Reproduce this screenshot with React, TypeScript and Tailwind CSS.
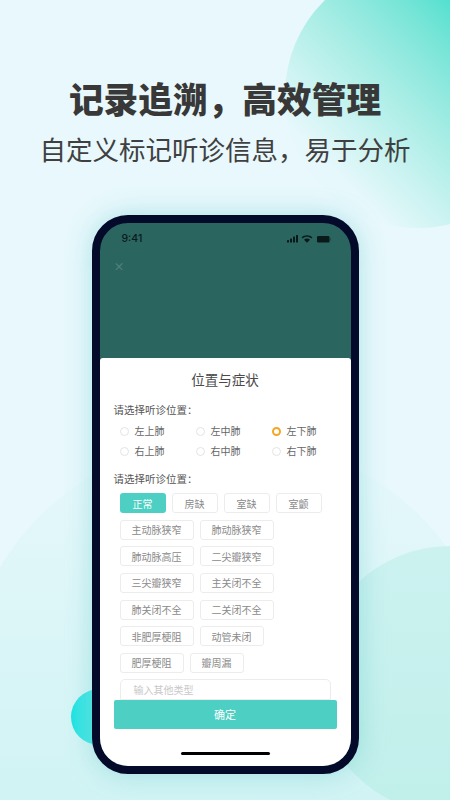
import React from 'react';

const radios = ['左上肺', '左中肺', '左下肺', '右上肺', '右中肺', '右下肺'];

const tagRows = [
  ['正常', '房缺', '室缺', '室颤'],
  ['主动脉狭窄', '肺动脉狭窄'],
  ['肺动脉高压', '二尖瓣狭窄'],
  ['三尖瓣狭窄', '主关闭不全'],
  ['肺关闭不全', '二关闭不全'],
  ['非肥厚梗阻', '动管未闭'],
  ['肥厚梗阻', '瓣周漏'],
];

const StatusIcons = () => (
  <svg width="44" height="10" viewBox="0 0 44 10" fill="#0a1a1a">
    {/* signal */}
    <rect x="0" y="6" width="2" height="2.500" rx="0.500" />
    <rect x="3" y="4.500" width="2" height="4" rx="0.500" />
    <rect x="6" y="2.500" width="2" height="6" rx="0.500" />
    <rect x="9" y="1" width="2" height="7.500" rx="0.500" />
    {/* wifi */}
    <path d="M20 1.200c-2.100 0-4 .8-5.400 2.100l1.100 1.200c1.100-1.100 2.700-1.700 4.300-1.700s3.200.6 4.300 1.700l1.100-1.200C24 2 22.100 1.200 20 1.200zM20 4.600c-1.200 0-2.200.4-3 1.200l3 3 3-3c-.8-.8-1.800-1.200-3-1.200z" />
    {/* battery */}
    <rect x="30" y="2" width="12.500" height="6.500" rx="1.200" />
    <rect x="43" y="4" width="1" height="2.500" rx="0.500" fill="#1c4a47" />
  </svg>
);

const Tag = ({ label, active }: { label: string; active?: boolean }) => (
  <div
    className={
      active
        ? 'h-5 min-w-[46px] px-[11px] flex items-center justify-center rounded-[3px] text-[10px] text-white bg-[#4dcfc3]'
        : 'h-5 min-w-[46px] px-[11px] flex items-center justify-center rounded-[3px] text-[10px] text-[#8a8a8a] bg-white border border-[#ececec]'
    }
  >
    {label}
  </div>
);

export default function App() {
  return (
    <div className="relative w-[450px] h-[800px] overflow-hidden bg-[#e8f8fc] font-['Noto_Sans_CJK_SC','Noto_Sans',sans-serif]">
      {/* background blobs */}
      <div className="absolute left-[285px] top-[-38px] w-[266px] h-[266px] rounded-full bg-gradient-to-bl from-[#52e0cf] from-[26%] to-[#e6f8fb] to-[80%]" />
      <div className="absolute left-[-38px] top-[437px] w-[536px] h-[536px] rounded-full bg-gradient-to-b from-[#e7f8fb] to-[#d0f3f4] to-[70%]" />
      <div className="absolute left-[316px] top-[546px] w-[268px] h-[268px] rounded-full bg-gradient-to-b from-[#ccf2f0] to-[#c0efea]" />
      <div className="absolute left-[71px] top-[689px] w-[56px] h-[56px] rounded-full bg-gradient-to-r from-[#1be3e3] to-[#7ceee8]" />

      <div className="relative flex flex-col items-center">
        <h1 className="mt-[74px] h-[48px] leading-[48px] text-[34.700px] font-black text-[#383838] whitespace-nowrap">
          记录追溯，高效管理
        </h1>
        <p className="mt-[3px] h-[48px] leading-[48px] text-[26.500px] text-[#404040] whitespace-nowrap">
          自定义标记听诊信息，易于分析
        </p>

        {/* phone */}
        <div className="mt-[42px] w-[267px] h-[559px] rounded-[36px] border-[8px] border-[#040a2a] bg-[#2a6560] overflow-hidden shadow-[0_0_26px_rgba(60,190,190,0.35)]">
          <div className="h-[135px] pl-[22px] pr-[20px] pt-[9px]">
            <div className="flex items-center justify-between h-[14px] text-[10.500px] text-[#0a1a1a] font-['Inter',sans-serif] font-medium">
              <span>9:41</span>
              <StatusIcons />
            </div>
            <div className="mt-[13px] -ml-[8px] text-[11px] font-bold leading-[14px] text-[#4f807b]">×</div>
          </div>

          <div className="flex flex-col h-[408px] bg-white rounded-t-[3px]">
            <div className="h-[41px] pt-[1px] flex items-center justify-center text-[13.500px] text-[#4a4a4a]">
              位置与症状
            </div>

            <div className="px-[14px] mt-[4px] h-[14px] leading-[14px] text-[10.500px] text-[#555]">请选择听诊位置：</div>
            <div className="mt-[7px] ml-[20px] grid grid-cols-[76px_76px_76px] gap-y-[6px]">
              {radios.map((r, i) => (
                <div key={r} className="flex items-center h-[14px] gap-[6px]">
                  {i === 2 ? (
                    <div className="w-[9px] h-[9px] rounded-full border-[2.500px] border-[#f5a623] bg-white" />
                  ) : (
                    <div className="w-[9px] h-[9px] rounded-full border border-[#e4e4e4] bg-white" />
                  )}
                  <span className="text-[10px] leading-[14px] text-[#666]">{r}</span>
                </div>
              ))}
            </div>

            <div className="px-[14px] mt-[14px] h-[14px] leading-[14px] text-[10.500px] text-[#555]">请选择听诊位置：</div>
            <div className="mt-[7px] ml-[20px] flex flex-col gap-y-[6.670px]">
              {tagRows.map((row, i) => (
                <div key={i} className="flex gap-x-[6px]">
                  {row.map((t) => (
                    <Tag key={t} label={t} active={t === '正常'} />
                  ))}
                </div>
              ))}
            </div>

            <div className="mt-[6px] ml-[20px] w-[211px] h-[21px] rounded-t-[5px] border border-[#ececec] flex items-center pl-[13px] text-[10px] text-[#c8c8c8]">
              输入其他类型
            </div>
            <div className="mx-[14px] h-[29px] rounded-[2px] bg-[#4dcfc3] flex items-center justify-center text-[11px] text-white">
              确定
            </div>
            <div className="mt-[23px] mx-auto w-[89px] h-[3px] rounded-full bg-black" />
          </div>
        </div>
      </div>
    </div>
  );
}
